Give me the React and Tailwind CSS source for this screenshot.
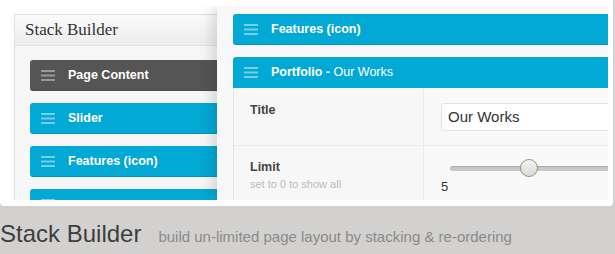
import React from 'react';

const Bars = ({ className = '' }) => (
  <svg width="14" height="11" viewBox="0 0 14 11" className={`shrink-0 ${className}`}>
    <rect x="0" y="0" width="14" height="2" fill="currentColor" />
    <rect x="0" y="4.5" width="14" height="2" fill="currentColor" />
    <rect x="0" y="9" width="14" height="2" fill="currentColor" />
  </svg>
);

// One draggable block of the stack
const Block = ({ dark = false, children, attached = false }) => (
  <div
    className={`flex items-center h-[31px] pl-[11px] text-white font-bold text-[12.5px] ${
      attached ? 'rounded-t-[3px]' : 'rounded-[3px] border-b border-black/10'
    } ${dark ? 'bg-[#555555]' : 'bg-[#03a9d5]'}`}
  >
    <Bars className={dark ? 'text-[#9a9a9a]' : 'text-white/45'} />
    {children && <span className="ml-[13px] whitespace-nowrap">{children}</span>}
  </div>
);

export default function App() {
  return (
    <div
      className="w-[615px] h-[254px] bg-[#d2d1cf] overflow-hidden"
      style={{ fontFamily: '"Liberation Sans", Arial, sans-serif' }}
    >
      <div className="w-[613px] h-[206px] bg-white rounded-b-[4px] pt-[6px] px-[5px]">
        <div className="flex h-[194px] overflow-hidden">
          {/* left: stack list */}
          <div className="w-[212px] shrink-0 pt-[8px] pl-[9px]">
            <div className="w-[240px] border border-[#dedede] bg-[#f6f6f6]">
              <div
                className="h-[31px] border-b border-[#e0e0e0] bg-gradient-to-b from-[#fbfbfb] to-[#ececec] pl-[10px] leading-[30px] text-[17px] text-[#333]"
                style={{ fontFamily: '"Liberation Serif", Georgia, serif' }}
              >
                Stack Builder
              </div>
              <div className="flex flex-col gap-[12px] pt-[14px] pl-[15px] pb-[20px]">
                <Block dark>Page Content</Block>
                <Block>Slider</Block>
                <Block>Features (icon)</Block>
                <Block />
              </div>
            </div>
          </div>

          {/* right: editing panel */}
          <div className="relative z-10 w-[391px] shrink-0 bg-[#f8f8f8] pt-[8px] pl-[16px] overflow-hidden shadow-[-6px_0_12px_rgba(0,0,0,0.12)]">
            <div className="w-[390px] flex flex-col">
              <Block>Features (icon)</Block>
              <div className="mt-[12px]">
                <Block attached>
                  Portfolio - <span className="font-normal">Our Works</span>
                </Block>
                <div className="border-l border-[#e6e6e6] bg-[#f7f7f7] text-[#444]">
                  <div className="grid grid-cols-[189px_1fr] h-[58px] border-b border-[#ececec]">
                    <div className="pl-[16px] pt-[14px] font-bold text-[12.5px] leading-[16px]">Title</div>
                    <div className="border-l border-[#ececec] bg-[#f9f9f9] pl-[17px] pt-[15px]">
                      <div className="h-[28px] bg-white border border-[#e2e2e2] rounded-[3px] pl-[6px] flex items-center text-[15px] text-[#333]">
                        Our Works
                      </div>
                    </div>
                  </div>
                  <div className="grid grid-cols-[189px_1fr] h-[60px]">
                    <div className="pl-[16px] pt-[13px]">
                      <div className="font-bold text-[12.5px] leading-[16px]">Limit</div>
                      <div className="mt-[1px] text-[11px] leading-[16px] text-[#bbbbbb]">set to 0 to show all</div>
                    </div>
                    <div className="border-l border-[#ececec] bg-[#f9f9f9] pl-[17px] pt-[13px]">
                      <div className="flex items-center h-[18px] pl-[9px]">
                        <div className="flex-1 flex items-center h-[5px] rounded-full bg-[#c8c8c8] shadow-[inset_0_1px_1px_rgba(0,0,0,0.15)]">
                          <div className="w-[70px] shrink-0" />
                          <div className="w-[18px] h-[18px] rounded-full border-[1.5px] border-[#8c9c62] bg-gradient-to-b from-[#f4f4f4] to-[#d9d9d9] shrink-0" />
                        </div>
                      </div>
                      <div className="mt-[2px] text-[13px] leading-[16px] text-[#333]">5</div>
                    </div>
                  </div>
                </div>
              </div>
            </div>
          </div>
        </div>
      </div>

      <div className="flex items-baseline mt-[16px] whitespace-nowrap">
        <span className="text-[24px] leading-[24px] text-[#3e3e3e]">Stack Builder</span>
        <span className="ml-[17px] text-[15px] text-[#8a8a8a]">build un-limited page layout by stacking &amp; re-ordering</span>
      </div>
    </div>
  );
}
